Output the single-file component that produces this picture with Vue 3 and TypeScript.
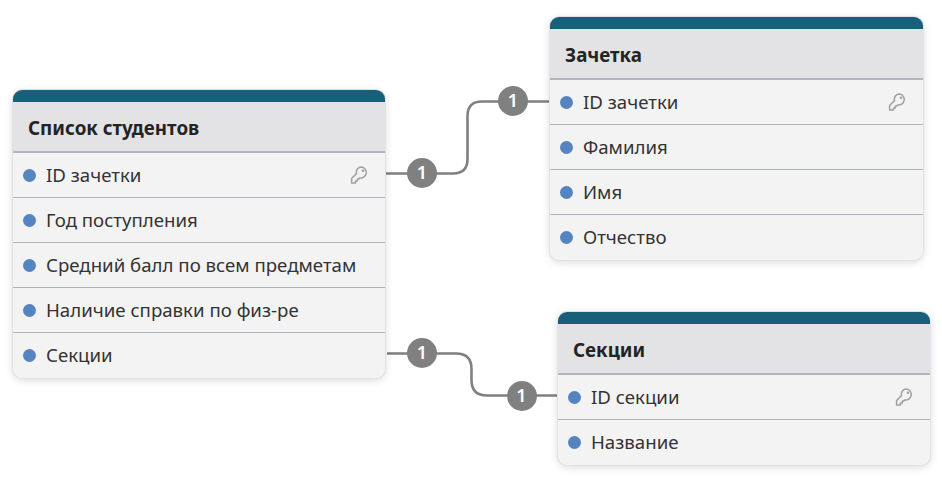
<script setup lang="ts">
interface Row { name: string; key?: boolean }
interface Table { title: string; left: number; top: number; width: number; rows: Row[] }

const tables: Table[] = [
  { title: 'Список студентов', left: 13, top: 90, width: 372, rows: [
    { name: 'ID зачетки', key: true },
    { name: 'Год поступления' },
    { name: 'Средний балл по всем предметам' },
    { name: 'Наличие справки по физ-ре' },
    { name: 'Секции' },
  ] },
  { title: 'Зачетка', left: 550, top: 17, width: 373, rows: [
    { name: 'ID зачетки', key: true },
    { name: 'Фамилия' },
    { name: 'Имя' },
    { name: 'Отчество' },
  ] },
  { title: 'Секции', left: 558, top: 312, width: 372, rows: [
    { name: 'ID секции', key: true },
    { name: 'Название' },
  ] },
]

const badges = [
  { x: 422, y: 173 },
  { x: 513, y: 101 },
  { x: 422, y: 353 },
  { x: 521.5, y: 395.5 },
]
</script>

<template>
  <div class="canvas">
    <svg class="links" width="942" height="482" viewBox="0 0 942 482">
      <path class="link" d="M386 173.5H453Q467.5 173.5 467.5 159V116Q467.5 101.5 482 101.5H550" />
      <path class="link" d="M387 353.5H456Q471.5 353.5 471.5 369V380Q471.5 395.5 487 395.5H558" />
    </svg>
    <div
      v-for="b in badges"
      :key="b.x + '-' + b.y"
      class="badge"
      :style="{ left: b.x - 15 + 'px', top: b.y - 15 + 'px' }"
    >1</div>
    <section
      v-for="t in tables"
      :key="t.title"
      class="table"
      :style="{ left: t.left + 'px', top: t.top + 'px', width: t.width + 'px' }"
    >
      <div class="bar"></div>
      <h2 class="title">{{ t.title }}</h2>
      <div v-for="r in t.rows" :key="r.name" class="row">
        <span class="dot"></span>
        <span class="name">{{ r.name }}</span>
        <svg v-if="r.key" class="key" width="18" height="18" viewBox="0 0 18 18" fill="none">
          <path d="M11.5 .9a5.2 5.2 0 0 0-5 6.7L1.6 12.5v4.6h3.9v-2h1.9v-2.2h1.5l1-1a5.2 5.2 0 1 0 1.6-11Z" stroke="#a0a0a0" stroke-width="1.5" stroke-linejoin="round" />
          <circle cx="13" cy="4.8" r="1.3" fill="#a0a0a0" />
        </svg>
      </div>
    </section>
  </div>
</template>

<style>
html, body { margin: 0; background: #fff; }
</style>

<style scoped>
.canvas {
  position: relative;
  width: 942px;
  height: 482px;
  overflow: hidden;
  background: #fff;
  font-family: "Noto Sans", "Open Sans", sans-serif;
}
.links { position: absolute; left: 0; top: 0; }
.link { fill: none; stroke: #808080; stroke-width: 2.6; }
.badge {
  position: absolute;
  width: 30px;
  height: 30px;
  border-radius: 50%;
  background: #808080;
  color: #fff;
  font-size: 18px;
  font-weight: 600;
  line-height: 29px;
  text-align: center;
}
.table {
  position: absolute;
  box-sizing: border-box;
  background: #f3f3f3;
  border-radius: 9px;
  overflow: hidden;
  box-shadow: 0 0 0 1px #e2e2e6, 0 2px 8px rgba(0, 0, 0, 0.16);
}
.bar { height: 12px; background: #185f7a; }
.title {
  margin: 0;
  box-sizing: border-box;
  height: 51px;
  padding: 0 15px;
  background: #e3e3e6;
  border-bottom: 2px solid #b0b4c4;
  color: #242424;
  font-size: 18.8px;
  font-weight: 700;
  line-height: 52px;
}
.row {
  display: flex;
  align-items: center;
  box-sizing: border-box;
  height: 45px;
  padding: 0 17px 0 10px;
  border-bottom: 1px solid #adb2c2;
  color: #333;
  font-size: 18.65px;
}
.row:last-child { border-bottom: 0; }
.dot {
  width: 13px;
  height: 13px;
  margin-right: 10px;
  border-radius: 50%;
  background: #5684c0;
  flex: none;
}
.name { flex: 1; margin-bottom: 2px; }
.key { flex: none; }
</style>
